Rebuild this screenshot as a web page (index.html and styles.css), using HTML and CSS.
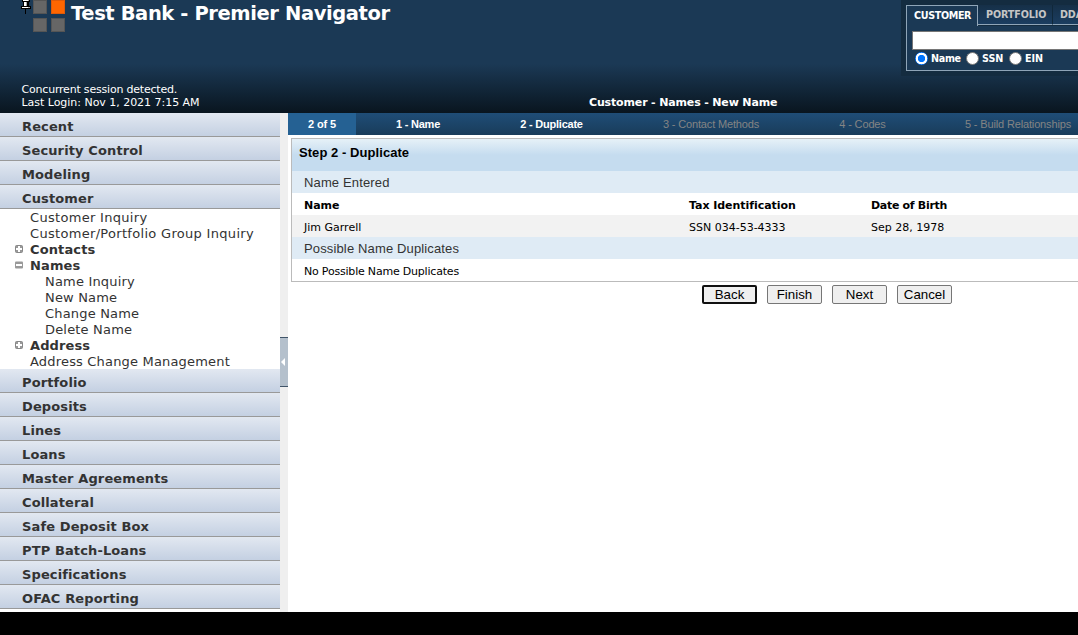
FILE: index.html
```html
<!DOCTYPE html>
<html lang="en">
<head>
<meta charset="utf-8">
<title>Test Bank - Premier Navigator</title>
<link rel="stylesheet" href="styles.css">
</head>
<body>
<header class="header">
  <div class="brand">
    <svg class="pin" width="10" height="14" viewBox="0 0 10 14" shape-rendering="crispEdges"><path fill="#000" d="M1 0h8v2H8v4h2v3H0V6h2V2H1zM4 9h1v5H4z"/><path fill="#fff" d="M2 0h5v1H2zM3 2h2v4H3zM1 7h6v1H1z"/><path fill="#aaa" d="M5 2h1v4H5zM7 0h1v1H7zM7 7h2v1H7z"/></svg>
    <div class="logo"><i></i><i class="hot"></i><i></i><i></i></div>
    <h1 class="title"><span>Test Bank - Premier Navigator</span></h1>
  </div>
  <div class="search">
    <div class="tabs"><div class="tab active"><span>CUSTOMER</span></div><div class="tab second"><span>PORTFOLIO</span></div><div class="tab third"><span>DDA</span></div></div>
    <div class="panel">
      <div class="field"></div>
      <div class="radios"><b class="radio on"></b><span class="rl rl-name">Name</span><b class="radio"></b><span class="rl rl-ssn">SSN</span><b class="radio"></b><span class="rl">EIN</span></div>
    </div>
  </div>
  <div class="status"><div class="session">Concurrent session detected.</div><div>Last Login: Nov 1, 2021 7:15 AM</div></div>
  <div class="crumb"><span>Customer - Names - New Name</span></div>
</header>
<main class="main">
  <nav class="nav">
    <div class="head"><span>Recent</span></div>
    <div class="head"><span>Security Control</span></div>
    <div class="head"><span>Modeling</span></div>
    <div class="head"><span>Customer</span></div>
    <div class="tree">
      <div class="item wide"><span>Customer Inquiry</span></div>
      <div class="item wide"><span>Customer/Portfolio Group Inquiry</span></div>
      <div class="item group"><svg width="8" height="8" viewBox="0 0 8 8"><rect x=".5" y=".5" width="7" height="7" rx="1" fill="#999" stroke="#888"/><path d="M3 1h2v2h2v2H5v2H3V5H1V3h2z" fill="#fff"/></svg><span>Contacts</span></div>
      <div class="item group"><svg width="8" height="8" viewBox="0 0 8 8"><rect y=".5" width="8" height="7" rx="1" fill="#999"/><path d="M1 3h6v2H1z" fill="#fff"/></svg><span>Names</span></div>
      <div class="item sub"><span>Name Inquiry</span></div>
      <div class="item sub"><span>New Name</span></div>
      <div class="item sub"><span>Change Name</span></div>
      <div class="item sub"><span>Delete Name</span></div>
      <div class="item group"><svg width="8" height="8" viewBox="0 0 8 8"><rect x=".5" y=".5" width="7" height="7" rx="1" fill="#999" stroke="#888"/><path d="M3 1h2v2h2v2H5v2H3V5H1V3h2z" fill="#fff"/></svg><span>Address</span></div>
      <div class="item"><span>Address Change Management</span></div>
    </div>
    <div class="head"><span>Portfolio</span></div>
    <div class="head"><span>Deposits</span></div>
    <div class="head"><span>Lines</span></div>
    <div class="head"><span>Loans</span></div>
    <div class="head"><span>Master Agreements</span></div>
    <div class="head"><span>Collateral</span></div>
    <div class="head"><span>Safe Deposit Box</span></div>
    <div class="head"><span>PTP Batch-Loans</span></div>
    <div class="head"><span>Specifications</span></div>
    <div class="head"><span>OFAC Reporting</span></div>
  </nav>
  <div class="splitter"><div class="handle"><svg width="4" height="8" viewBox="0 0 4 8"><path d="M4 0v8L0 4z" fill="#fff"/></svg></div></div>
  <section class="content">
    <div class="steps">
      <div class="step count"><span>2 of 5</span></div>
      <div class="step done"><span>1 - Name</span></div>
      <div class="step done"><span>2 - Duplicate</span></div>
      <div class="step"><span>3 - Contact Methods</span></div>
      <div class="step"><span>4 - Codes</span></div>
      <div class="step last"><span>5 - Build Relationships</span></div>
    </div>
    <div class="card">
      <h2 class="card-title"><span>Step 2 - Duplicate</span></h2>
      <div class="row section"><span>Name Entered</span></div>
      <div class="row cols"><span>Name</span><span>Tax Identification</span><span class="dob">Date of Birth</span></div>
      <div class="row data"><span>Jim Garrell</span><span>SSN 034-53-4333</span><span>Sep 28, 1978</span></div>
      <div class="row section"><span>Possible Name Duplicates</span></div>
      <div class="row note"><span>No Possible Name Duplicates</span></div>
    </div>
    <div class="buttons"><button class="btn focus">Back</button><button class="btn">Finish</button><button class="btn">Next</button><button class="btn">Cancel</button></div>
  </section>
</main>
<footer class="footer"></footer>
</body>
</html>
```
FILE: styles.css
```css
* { box-sizing: border-box; }
html, body { margin: 0; height: 635px; overflow: hidden; }
body { background: #fff; font: 11px "DejaVu Sans", sans-serif; color: #000; white-space: nowrap; }

.header { display: grid; grid-template-columns: 589px 312px 177px; grid-template-rows: 76px 37px; height: 113px; color: #fff; background: linear-gradient(#1b3955 0, #1b3955 64px, #09151f 113px); }
.brand { grid-column: 1 / 3; display: flex; padding-left: 21px; }
.pin { flex: none; }
.logo { display: grid; grid-template-columns: 14px 14px; grid-template-rows: 14px 14px; gap: 4px; margin-left: 2px; }
.logo i { background: #666; border: 1px solid #555; }
.logo .hot { background: #f60; border-color: #e05a08; }
.title { margin: 0 0 0 6px; font-size: 19.5px; line-height: 28px; letter-spacing: -.4px; }
.status { grid-column: 1; padding: 7px 0 0 21.5px; line-height: 13px; letter-spacing: -.03px; }
.session { letter-spacing: -.2px; }
.crumb { grid-column: 2 / 4; padding-top: 19px; line-height: 15px; font-weight: bold; letter-spacing: -.15px; }

.search { background: #142c40; padding: 5px 0 0 5px; overflow: hidden; }
.tabs { display: flex; height: 21px; }
.tab { height: 20px; padding: 0 7px; border-right: 1px solid #10283a; border-bottom: 1px solid #8fa5b8; line-height: 20px; color: #c5c5c5; font-weight: bold; font-size: 9.6px; letter-spacing: -.35px; background: linear-gradient(#163048, #1b3d60); }
.tab.active { width: 72px; height: 21px; color: #fff; line-height: 20px; background: #1b3955; border: 1px solid #8fa5b8; border-bottom: 0; }
.tab.second { width: 75px; padding-left: 8px; letter-spacing: -.1px; }
.tab.third { width: 60px; flex: none; letter-spacing: -.1px; }
.panel { height: 45px; width: 190px; background: #1b3955; border: 1px solid #8fa5b8; border-top: 0; padding: 5px 0 0 5px; }
.field { height: 19px; background: #fff; border: 1px solid #767676; }
.radios { display: flex; align-items: center; height: 17px; padding-left: 3px; font-weight: bold; font-size: 9.6px; letter-spacing: -.1px; }
.radio { flex: none; width: 13px; height: 13px; border-radius: 50%; background: #fff; border: 1px solid #767676; }
.radio.on { border: 0; background: radial-gradient(circle, #0075ff 3.4px, #fff 3.9px 5.6px, #0075ff 6.1px); }
.rl { margin-left: 3px; }
.rl-name { width: 35px; letter-spacing: -.3px; }
.rl-ssn { width: 27px; }

.main { display: flex; height: 499px; }
.nav { width: 280px; background: #fff; font-size: 13px; color: #333; }
.head { height: 24px; padding: 2px 0 0 22px; line-height: 24px; font-weight: bold; letter-spacing: .12px; border-bottom: 1px solid #999; background: linear-gradient(#e2e8f1, #c4d0e2); }
.tree { height: 160px; }
.item { height: 16px; line-height: 18px; padding-left: 30px; letter-spacing: .18px; }
.item.wide { letter-spacing: .31px; }
.item.sub { padding-left: 45px; }
.item.group { display: flex; align-items: flex-start; padding-left: 15px; gap: 7px; font-weight: bold; letter-spacing: .12px; }
.group svg { margin-top: 4px; }
.splitter { width: 8px; background: #efefef; padding-top: 224px; }
.handle { height: 50px; background: #b4c0cc; border: solid #405468; border-width: 1px 0; display: flex; align-items: center; padding-left: 1px; }

.content { width: 790px; overflow: hidden; }
.steps { display: flex; height: 22px; background: linear-gradient(#1f4d77, #193c5a); font-family: "Liberation Sans", sans-serif; line-height: 23px; color: #848484; letter-spacing: -.15px; }
.step { text-align: center; width: 124px; flex: none; }
.step.count { width: 68px; color: #fff; font-weight: bold; background: #256193; }
.step.done { color: #fff; font-weight: bold; letter-spacing: -.22px; }
.step:nth-child(3) { width: 143px; }
.step:nth-child(4) { width: 176px; }
.step:nth-child(5) { width: 127px; }
.step.last { width: 184px; }
.card { width: 800px; margin: 3px 0 0 3px; border: 1px solid #bbb; }
.card-title { margin: 0; height: 32px; padding-left: 7px; font: bold 13px/27px "Liberation Sans", sans-serif; letter-spacing: .06px; background: linear-gradient(#e6f1f7, #c5dcef 50%); }
.row { height: 22px; padding-left: 12px; line-height: 25px; }
.section { font: 13px/23px "Liberation Sans", sans-serif; letter-spacing: .14px; color: #333; background: #dfebf5; }
.cols, .data { display: grid; grid-template-columns: 385px 182px 1fr; }
.cols { font-weight: bold; letter-spacing: -.05px; }
.dob { letter-spacing: -.3px; }
.data { background: #f2f2f2; }
.note { line-height: 25px; letter-spacing: -.2px; }
.buttons { display: flex; gap: 10px; padding: 3px 0 0 414px; }
.btn { width: 55px; height: 19px; padding: 0; border: 1px solid #767676; border-radius: 2px; background: #efefef; color: #000; font: 13.3px/16px "Liberation Sans", sans-serif; }
.btn.focus { border: 2px solid #101010; line-height: 14px; }
.footer { height: 23px; background: #000; }
```
